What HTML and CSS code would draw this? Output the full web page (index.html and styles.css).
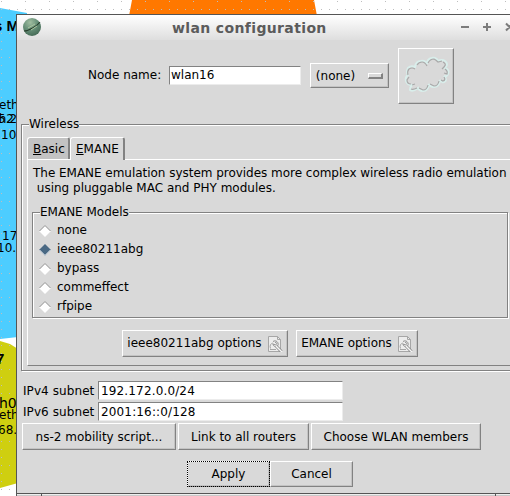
FILE: index.html
```
<!DOCTYPE html>
<html lang="en">
<head>
<meta charset="utf-8">
<title>wlan configuration</title>
<link rel="stylesheet" href="styles.css">
</head>
<body>
<svg class="canvas" width="510" height="496" viewBox="0 0 510 496">
  <defs>
    <pattern id="grid" width="24" height="24" x="1" y="9" patternUnits="userSpaceOnUse">
      <path fill="#bebebe" d="M0 0h1v1h-1zM8 0h1v1h-1zM16 0h1v1h-1zM0 8h1v1h-1zM0 16h1v1h-1z"/>
    </pattern>
  </defs>
  <path fill="#fff" d="M0 0h510v496H0z"/>
  <path fill="#4dcdff" d="M0 8l27 5v323L0 339z"/>
  <path fill="#ff7800" d="M132 0h182l3 16H129z"/>
  <path fill="#cfcf10" d="M0 341l10 3 8 5v134L0 488z"/>
  <path fill="url(#grid)" d="M0 0h510v496H0z"/>
  <text class="node" x="-6" y="31">s M</text>
  <text class="iface" x="-1" y="109">eth</text>
  <text class="iface" x="-2" y="123">5.25</text>
  <text class="iface" x="-6" y="123">th2</text>
  <text class="iface" x="1" y="139">10.</text>
  <text class="iface" x="2" y="240">17</text>
  <text class="iface" x="-3" y="252">10.</text>
  <text class="node" x="-4" y="364">7</text>
  <text class="iface large" x="-1" y="408">h0</text>
  <text class="iface" x="-1" y="419">eth</text>
  <text class="iface" x="-2" y="434">68.</text>
</svg>

<main class="window">
  <header class="titlebar">
    <svg class="logo" width="18" height="18" viewBox="0 0 18 18">
      <defs><radialGradient id="ball" cx=".4" cy=".25" r=".8"><stop offset="0" stop-color="#a0bda0"/><stop offset=".5" stop-color="#679078"/><stop offset="1" stop-color="#426753"/></radialGradient></defs>
      <circle cx="9" cy="9" r="9" fill="url(#ball)"/>
      <path d="M1 13C6 13 14 8 17 4" fill="none" stroke="#263d2b" stroke-width="1.1"/>
      <path d="M5 10l7-4M8 12l6-4" stroke="#a9c49f" stroke-width="1"/>
    </svg>
    <h1>wlan configuration</h1>
    <svg class="controls" width="64" height="12" viewBox="0 0 64 12" fill="none" stroke="#7c7c7c" stroke-width="2">
      <path d="M1 6h8M23 6h8M27 2v8M46 2.500l7 7M53 2.500l-7 7"/>
    </svg>
  </header>

  <div class="form-row">
    <label class="name-label">Node name:</label>
    <div class="entry name-entry">wlan16</div>
    <div class="raised select"><span>(none)</span><i class="indicator"></i></div>
    <div class="raised cloud">
      <svg width="54" height="54" viewBox="0 0 54 54" fill="none">
        <path stroke="#d9eeeb" stroke-width="2" d="M9 26Q7 23 9 19Q12 16 16 18Q17 12 22 12Q26 11 28 15Q28 10 33 9Q37 8 39 12Q43 10 46 12Q50 15 46 19Q51 21 49 25Q48 28 45 27Q49 31 45 33Q42 34 41 31Q40 38 35 38Q31 38 30 35Q29 42 24 42Q20 42 19 39Q14 43 11 41Q11 38 13 36Q8 36 7 32Q6 28 9 26Z"/>
        <path stroke="#a9a9a9" stroke-width="1.200" d="M9 26Q8 22 10 20Q13 18 16 20M18 16Q20 13 23 13Q26 13 28 17M29 14Q31 10 35 10Q37 11 39 13L43 12M44 13Q48 15 45 18L43 20M46 20Q49 22 48 25L45 24M45 28Q47 31 44 32L42 31M40 32Q39 37 35 37L31 35M29 36Q28 41 24 41L20 39M18 39Q14 41 12 40M13 36L16 35M12 35Q8 35 8 31L10 28"/>
      </svg>
    </div>
  </div>

  <section class="groove wireless">
    <span class="legend">Wireless</span>
    <div class="tabs">
      <div class="tab"><u>B</u>asic</div>
      <div class="tab active"><u>E</u>MANE</div>
    </div>
    <div class="pane">
      <p class="about"><span>The EMANE emulation system provides more complex wireless radio emulation</span><br>&nbsp;using pluggable MAC and PHY modules.</p>
      <div class="groove models">
        <span class="legend">EMANE Models</span>
        <div class="radio"><svg width="12" height="12"><path fill="#fff" d="M0 6l6-6 6 6-6 6z"/><path fill="none" stroke="#858585" d="M.5 6L6 .5 11.500 6"/></svg>none</div>
        <div class="radio"><svg width="12" height="12"><path fill="#4a6984" d="M0 6l6-6 6 6-6 6z"/><path fill="none" stroke="#fff" d="M.5 6L6 11.500 11.500 6"/></svg>ieee80211abg</div>
        <div class="radio"><svg width="12" height="12"><path fill="#fff" d="M0 6l6-6 6 6-6 6z"/><path fill="none" stroke="#858585" d="M.5 6L6 .5 11.500 6"/></svg>bypass</div>
        <div class="radio"><svg width="12" height="12"><path fill="#fff" d="M0 6l6-6 6 6-6 6z"/><path fill="none" stroke="#858585" d="M.5 6L6 .5 11.500 6"/></svg>commeffect</div>
        <div class="radio"><svg width="12" height="12"><path fill="#fff" d="M0 6l6-6 6 6-6 6z"/><path fill="none" stroke="#858585" d="M.5 6L6 .5 11.500 6"/></svg>rfpipe</div>
      </div>
      <div class="options">
        <div class="raised opt-a"><span>ieee80211abg options</span><svg width="16" height="16" viewBox="0 0 16 16" fill="none"><path fill="#ececec" stroke="#a6a6a6" d="M1.500.5h9l3 3v12h-12z"/><path stroke="#a6a6a6" d="M10.500.5v3h3M3.500 12.500c-1-3 0-5 2.500-5.500M3 13.500h6"/><path stroke="#888" stroke-width="3" d="M9 10l5.500 5.500"/><path stroke="#909090" d="M6 5.500c3-2 6 1 5 4-2 2-5 1-5-1.500l2.500 1L10 7.500 8 6"/><path stroke="#f6f6f6" stroke-width="1.500" d="M9 10l6 6"/></svg></div>
        <div class="raised opt-b"><span>EMANE options</span><svg width="16" height="16" viewBox="0 0 16 16" fill="none"><path fill="#ececec" stroke="#a6a6a6" d="M1.500.5h9l3 3v12h-12z"/><path stroke="#a6a6a6" d="M10.500.5v3h3M3.500 12.500c-1-3 0-5 2.500-5.500M3 13.500h6"/><path stroke="#888" stroke-width="3" d="M9 10l5.500 5.500"/><path stroke="#909090" d="M6 5.500c3-2 6 1 5 4-2 2-5 1-5-1.500l2.500 1L10 7.500 8 6"/><path stroke="#f6f6f6" stroke-width="1.500" d="M9 10l6 6"/></svg></div>
      </div>
    </div>
  </section>

  <div class="subnets">
    <label>IPv4 subnet</label><div class="entry">192.172.0.0/24</div>
    <label>IPv6 subnet</label><div class="entry">2001:16::0/128</div>
  </div>
  <div class="actions">
    <div class="raised act-a">ns-2 mobility script...</div>
    <div class="raised act-b">Link to all routers</div>
    <div class="raised act-c">Choose WLAN members</div>
  </div>
  <div class="confirm">
    <div class="raised focus">Apply</div>
    <div class="raised">Cancel</div>
  </div>
  <footer class="frame"><i></i><i></i><i></i></footer>
</main>
</body>
</html>
```
FILE: styles.css
```
* { box-sizing: border-box; }
body {
  margin: 0;
  width: 510px;
  height: 496px;
  overflow: hidden;
  position: relative;
  font: 12px/15px "DejaVu Sans", sans-serif;
  color: #000;
  white-space: nowrap;
}
.canvas { display: block; }
.node { font: bold 15px "Liberation Sans", sans-serif; }
.iface { font: 12px "DejaVu Sans", sans-serif; }
.large { font-size: 14px; }

.window {
  position: absolute;
  left: 16px;
  top: 14px;
  width: 505px;
  height: 482px;
  border: solid #555;
  border-width: 1px 0 0 1px;
  background: #d9d9d9;
  display: flex;
  flex-direction: column;
}
.titlebar {
  height: 25px;
  flex: none;
  display: flex;
  align-items: center;
  padding-left: 6px;
  background: linear-gradient(#fff, #dedede);
}
.logo { flex: none; margin-top: -1px; }
h1 {
  flex: none;
  margin: 0 0 0 131px;
  width: 158px;
  font: bold 14px/24px "DejaVu Sans", sans-serif;
  letter-spacing: 0.36px;
  color: #5b5b5b;
}
.controls { flex: none; margin: -1px 0 0 130px; }

.raised {
  border: 1px solid;
  border-color: #fff #828282 #828282 #fff;
  box-shadow: inset -1px -1px #c3c3c3;
  display: flex;
  align-items: center;
  justify-content: center;
}
.entry {
  height: 19px;
  padding: 1px 0 0 2px;
  background: #fff;
  border: 1px solid;
  border-color: #828282 #ececec #ececec #828282;
}

.form-row {
  height: 75px;
  flex: none;
  display: flex;
  align-items: flex-start;
  padding: 8px 0 0 71px;
}
.name-label { width: 81px; margin-top: 20px; }
.name-entry { width: 132px; margin-top: 18px; padding: 1px 0 0 1px; }
.select { width: 79px; height: 25px; margin: 15px 9px 0; gap: 13px; padding-top: 1px; }
.indicator {
  width: 15px;
  height: 6px;
  border: solid;
  border-width: 1px 2px 2px 1px;
  border-color: #fff #828282 #828282 #fff;
}
.cloud { width: 56px; height: 56px; }

.groove {
  position: relative;
  border: 1px solid #828282;
  box-shadow: inset 1px 1px #fff, 1px 1px #fff;
}
.legend {
  position: absolute;
  top: -8px;
  left: 7px;
  background: #d9d9d9;
}
.wireless {
  height: 247px;
  flex: none;
  margin: 9px 0 0 4px;
  padding: 12px 0 0 5px;
}
.tabs { height: 22px; display: flex; align-items: flex-end; }
.tab {
  width: 43px;
  height: 22px;
  padding: 4px 0 0 5px;
  background: #c3c3c3;
  border: solid;
  border-width: 1px 2px 0 1px;
  border-color: #fff #828282 #fff #fff;
  border-radius: 3px 3px 0 0;
}
.tab.active {
  position: relative;
  width: 55px;
  height: 23px;
  margin-bottom: -1px;
  background: #d9d9d9;
}
.pane {
  height: 207px;
  border: solid;
  border-width: 1px 0 1px 1px;
  border-color: #fff #828282 #828282 #fff;
  padding: 6px 0 0 4px;
}
.about { margin: 0; padding-left: 1px; height: 46px; }
.about span { letter-spacing: -0.03px; }
.models { width: 476px; height: 106px; padding: 8px 0 0 6px; }
.radio { height: 19px; display: flex; align-items: center; gap: 6px; }
.options { display: flex; gap: 8px; padding: 12px 0 0 90px; }
.options .raised { height: 27px; gap: 5px; }
.opt-a { width: 166px; }
.opt-b { width: 122px; }

.subnets {
  display: grid;
  grid-template-columns: 75px 245px;
  row-gap: 2px;
  align-items: center;
  padding: 10px 0 0 6px;
}
.subnets label { padding-top: 2px; letter-spacing: 0.08px; }
.subnets .entry { padding-top: 2px; letter-spacing: 0.15px; }
.actions { display: flex; gap: 2px; padding: 2px 0 0 5px; }
.actions .raised { height: 27px; padding-top: 1px; }
.act-a { width: 154px; }
.act-b { width: 131px; }
.act-c { width: 170px; }
.confirm { display: flex; padding: 11px 0 0 170px; }
.confirm .raised { width: 83px; height: 26px; }
.confirm .focus { outline: 1px dotted #000; outline-offset: -1px; }
.frame {
  margin-top: auto;
  height: 3px;
  flex: none;
  display: grid;
  grid-template-columns: 24px 453px 20px;
  gap: 1px;
  border-top: 1px solid #555;
  background: #555;
}
.frame i { background: #c8c8c8; border-top: 1px solid #eee; }
```
